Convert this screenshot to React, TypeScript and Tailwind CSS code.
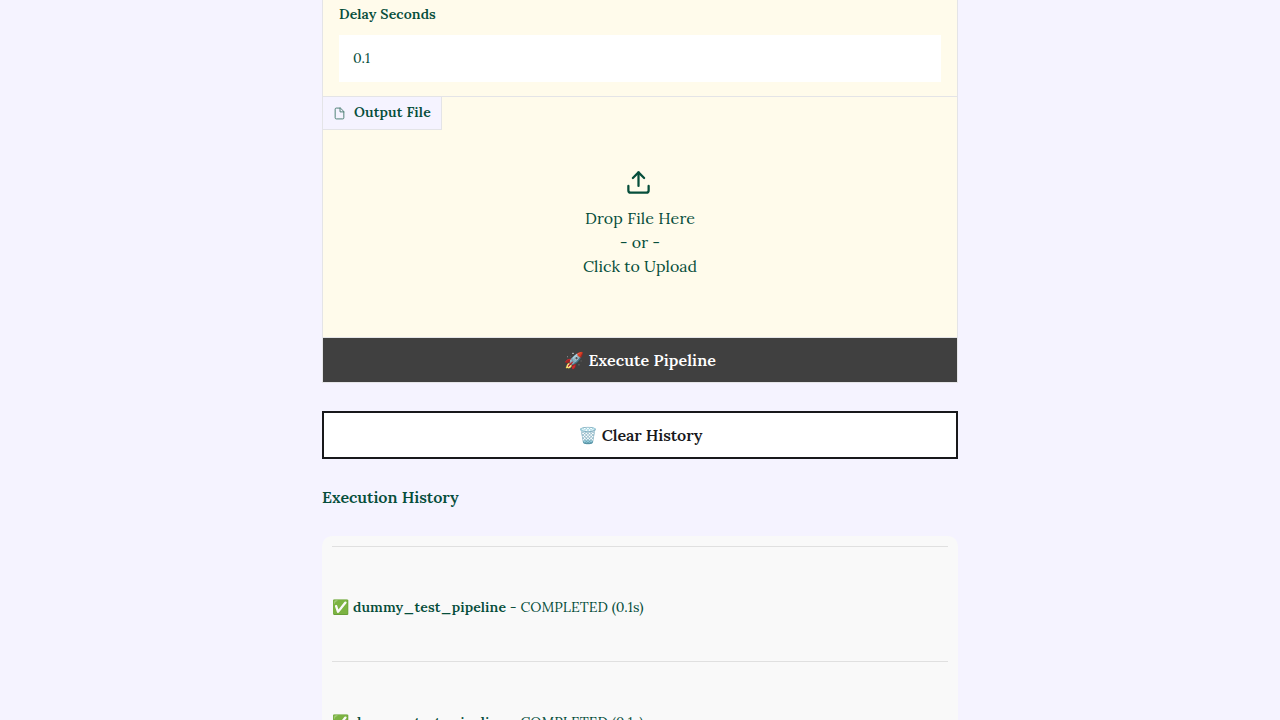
function Row() {
  return (
    <div className="h-[115px] border-t border-[#e0e0e0] pt-[50px]">
      <p className="flex h-5 items-center whitespace-pre text-[14px] leading-5">
        <span className="tracking-[0.15px]">✅ </span>
        <strong className="font-semibold tracking-[0.09px]">dummy_test_pipeline</strong>
        <span className="tracking-[0.06px]"> - COMPLETED (0.1s)</span>
      </p>
    </div>
  );
}

export default function App() {
  return (
    <div className="h-[720px] overflow-hidden bg-[#f5f3ff] font-['Lora','Liberation_Serif',serif] text-[#064e3b]">
      <main className="mx-auto w-[636px]">
        <section className="border-x border-b border-[#e4e4e7] bg-[#fffbeb]">
          <div className="h-[97px] border-b border-[#e4e4e7] px-4 pt-1">
            <label className="block h-[31px] text-[14px] leading-5 font-semibold tracking-[0.1px]">Delay Seconds</label>
            <input
              className="block h-[47px] w-full bg-white px-[14px] pb-[2px] text-[14px] leading-5 outline-none"
              defaultValue="0.1"
            />
          </div>
          <div className="h-[241px] border-b border-[#e4e4e7]">
            <div className="flex h-[33px] w-[119px] items-center border-r border-b border-[#e4e4e7] bg-[#f5f3ff] pl-[10px]">
              <svg
                className="mr-2 size-[13px] opacity-70"
                viewBox="0 0 24 24"
                fill="none"
                stroke="currentColor"
                strokeWidth="1.8"
                strokeLinecap="round"
                strokeLinejoin="round"
              >
                <path d="M13 2H6a2 2 0 0 0-2 2v16a2 2 0 0 0 2 2h12a2 2 0 0 0 2-2V9z" />
                <path d="M13 2v7h7" />
              </svg>
              <span className="pb-[2px] text-[14px] leading-5 font-semibold tracking-[0.16px]">Output File</span>
            </div>
            <div className="flex flex-col items-center pt-[38px] text-center text-[16px] leading-6">
              <div className="mb-2 size-[30px] pt-px">
                <svg
                  className="size-[27px]"
                  viewBox="0 0 24 24"
                  fill="none"
                  stroke="currentColor"
                  strokeWidth="2"
                  strokeLinecap="round"
                  strokeLinejoin="round"
                >
                  <path d="M21 15v4a2 2 0 0 1-2 2H5a2 2 0 0 1-2-2v-4" />
                  <path d="m17 8-5-5-5 5" />
                  <path d="M12 3v12" />
                </svg>
              </div>
              <p className="tracking-[0.12px]">Drop File Here</p>
              <p>- or -</p>
              <p>Click to Upload</p>
            </div>
          </div>
          <button className="flex h-11 w-full items-center justify-center bg-[#404040] text-[16px] leading-6 font-semibold tracking-[0.09px] text-white">
            🚀 Execute Pipeline
          </button>
        </section>
        <button className="mt-7 flex h-12 w-full items-center justify-center border-2 border-[#18181b] bg-white text-[16px] leading-6 font-semibold tracking-[-0.07px] text-[#18181b]">
          🗑️ Clear History
        </button>
        <h3 className="mt-[26px] h-[51px] text-[16px] leading-6 font-semibold tracking-[-0.04px]">Execution History</h3>
        <section className="rounded-t-[10px] bg-[#f9f9f9] p-[10px]">
          <Row />
          <Row />
        </section>
      </main>
    </div>
  );
}
